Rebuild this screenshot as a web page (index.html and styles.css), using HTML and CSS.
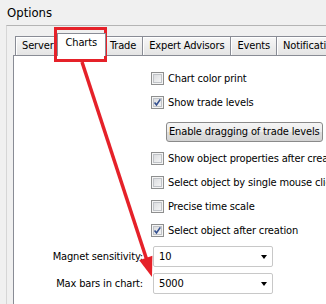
FILE: index.html
```html
<!DOCTYPE html>
<html lang="en">
<head>
    <meta charset="UTF-8">
    <meta name="viewport" content="width=device-width, initial-scale=1.0">
    <title>Options</title>
    <link rel="stylesheet" href="styles.css">
</head>
<body>
    <div class="title">Options</div>

    <div class="frame">
        <div class="tabs">
            <div class="tab">Server</div>
            <div class="tab active">Charts</div>
            <div class="tab">Trade</div>
            <div class="tab">Expert Advisors</div>
            <div class="tab">Events</div>
            <div class="tab">Notifications</div>
        </div>

        <div class="panel">
            <div class="check-row"><span class="box"></span>Chart color print</div>
            <div class="check-row"><span class="box checked"><svg viewBox="0 0 13 13"><path d="M3 6.5 L5.3 9.3 L9.8 2.8"/></svg></span>Show trade levels</div>
            <div class="select-btn">Enable dragging of trade levels</div>
            <div class="check-row"><span class="box"></span>Show object properties after creation</div>
            <div class="check-row"><span class="box"></span>Select object by single mouse click</div>
            <div class="check-row"><span class="box"></span>Precise time scale</div>
            <div class="check-row"><span class="box checked"><svg viewBox="0 0 13 13"><path d="M3 6.5 L5.3 9.3 L9.8 2.8"/></svg></span>Select object after creation</div>

            <div class="field first">
                <span class="field-label">Magnet sensitivity:</span>
                <div class="combo">10</div>
            </div>
            <div class="field">
                <span class="field-label">Max bars in chart:</span>
                <div class="combo">5000</div>
            </div>
        </div>
    </div>

    <!-- annotation drawn over the dialog -->
    <div class="callout"></div>
    <svg class="arrow" width="326" height="304" viewBox="0 0 326 304">
        <line x1="82" y1="62" x2="146.5" y2="259" />
        <polygon points="152,277 139.2,260.2 152.4,255.8" />
    </svg>
</body>
</html>
```

FILE: styles.css
```css
body {
    margin: 0;
    width: 326px;
    height: 304px;
    overflow: hidden;
    position: relative;
    background-color: #f0f0f0;
    font-family: "DejaVu Sans Condensed", "DejaVu Sans", sans-serif;
    font-size: 11px;
    letter-spacing: -0.15px;
    color: #000;
}
.title {
    height: 25px;
    line-height: 25px;
    padding-left: 7px;
    font-size: 13px;
    letter-spacing: 0;
}
.frame {
    margin-left: 6px;
    border-top: 1px solid #b4b4b4;
    border-left: 1px solid #d6d6d6;
    padding: 7px 0 0 6px;
}
.tabs {
    display: flex;
    align-items: flex-end;
    height: 22px;
    padding-left: 2px;
}
.tab {
    flex-shrink: 0;
    box-sizing: border-box;
    height: 19px;
    line-height: 18px;
    padding: 0 6px;
    margin-right: -1px;
    border: 1px solid #898c95;
    border-bottom: none;
    background: linear-gradient(#f7f7f7, #e4e4e4);
    box-shadow: inset 1px 1px 0 #fff;
    white-space: nowrap;
}
.tab.active {
    position: relative;
    z-index: 1;
    height: 23px;
    padding: 0 8px;
    margin: 0 -3px -1px -3px;
    background: #fff;
    box-shadow: none;
}
.panel {
    box-sizing: border-box;
    width: 400px;
    height: 260px;
    padding-top: 10px;
    background-color: #fff;
    border: 1px solid #898c95;
}
.check-row {
    display: flex;
    align-items: center;
    height: 24px;
    padding-left: 137px;
    white-space: nowrap;
}
.box {
    flex-shrink: 0;
    box-sizing: border-box;
    width: 13px;
    height: 13px;
    margin-right: 4px;
    border: 1px solid #8e8f8f;
    background: linear-gradient(135deg, #d4d6d9, #fbfbfb);
    box-shadow: inset 0 0 0 1px #f4f4f4, inset 0 0 0 2px #c0c3c7;
}
.box svg {
    display: block;
    width: 11px;
    height: 11px;
}
.box path {
    fill: none;
    stroke: #34508f;
    stroke-width: 1.9;
}
.select-btn {
    box-sizing: border-box;
    width: 157px;
    height: 20px;
    margin: 8px 0 4px 152px;
    padding-left: 2px;
    line-height: 18px;
    border: 1px solid #8a8a8a;
    border-radius: 3px;
    background: linear-gradient(#f5f5f5, #ececec 50%, #dedede 51%, #d3d3d3);
    white-space: nowrap;
    overflow: hidden;
}
.field {
    display: flex;
    align-items: center;
    margin-top: 6px;
}
.field.first {
    margin-top: 4px;
}
.field-label {
    width: 129px;
    padding-right: 10px;
    text-align: right;
    white-space: nowrap;
}
.combo {
    box-sizing: border-box;
    display: flex;
    align-items: center;
    justify-content: space-between;
    width: 120px;
    height: 21px;
    padding: 0 5px;
    border: 1px solid #c8c8c8;
    border-radius: 2px;
    background-color: #fff;
}
.combo::after {
    content: "";
    border-left: 3px solid transparent;
    border-right: 3px solid transparent;
    border-top: 4px solid #000;
}
.callout {
    position: absolute;
    left: 54px;
    top: 27px;
    width: 53px;
    height: 35px;
    box-sizing: border-box;
    border: 3px solid #e52129;
}
.arrow {
    position: absolute;
    left: 0;
    top: 0;
    pointer-events: none;
}
.arrow line {
    stroke: #e52129;
    stroke-width: 3.5;
}
.arrow polygon {
    fill: #e52129;
}
```
